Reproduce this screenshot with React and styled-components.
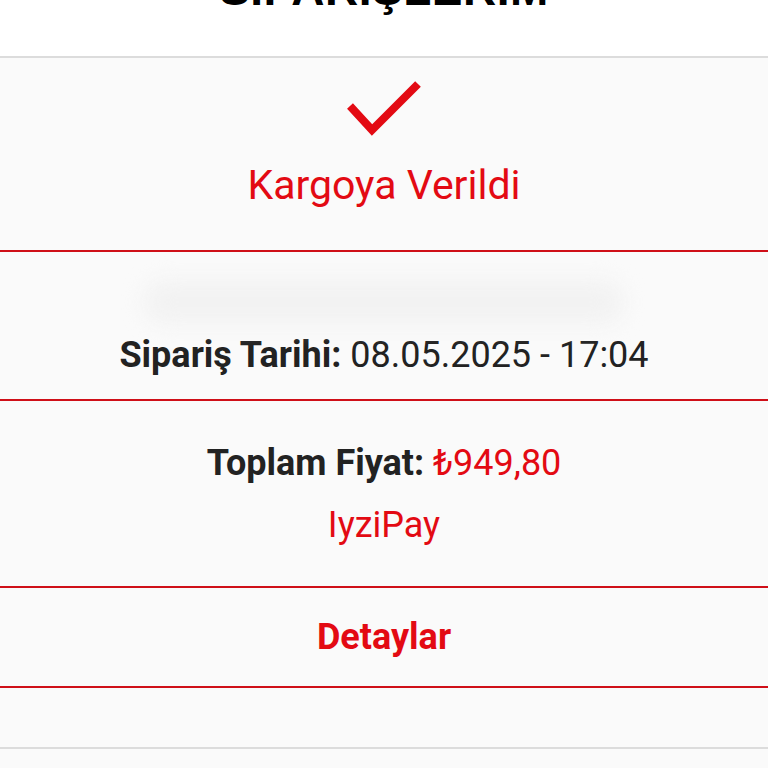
import React from "react";
import styled, { createGlobalStyle } from "styled-components";

const GlobalStyle = createGlobalStyle`
  html, body {
    margin: 0;
    padding: 0;
    background: #fafafa;
  }
  body {
    font-family: Roboto, "Noto Sans", sans-serif;
  }
`;

const Page = styled.div`
  width: 768px;
  height: 768px;
  overflow: hidden;
  background: #fafafa;
`;

const Header = styled.header`
  height: 56px;
  background: #fff;
  border-bottom: 2px solid #dcdcdc;
  overflow: hidden;
  display: flex;
  justify-content: center;
`;

const Title = styled.h1`
  margin: -34px 0 0;
  font-family: "Liberation Sans", Arial, sans-serif;
  font-weight: 700;
  font-size: 46px;
  line-height: 46px;
  color: #000;
  letter-spacing: 0.5px;
`;

const Card = styled.section`
  display: flex;
  flex-direction: column;
`;

const Block = styled.div`
  height: ${(p) => p.$h}px;
  display: flex;
  flex-direction: column;
  align-items: center;
  justify-content: ${(p) => p.$justify || "center"};
  border-bottom: ${(p) => (p.$line ? "2px solid #cf0f18" : "none")};
  box-sizing: border-box;
  padding-top: ${(p) => p.$pt || 0}px;
`;

const Status = styled.div`
  font-size: 41px;
  color: #e30a13;
  margin-top: 21px;
  line-height: 48px;
`;

const Blurred = styled.div`
  width: 480px;
  height: 44px;
  border-radius: 22px;
  background: #f2f2f2;
  filter: blur(10px);
  margin-bottom: 10px;
`;

const Line = styled.div`
  font-size: 36px;
  line-height: 42px;
  color: #222;
  margin-top: ${(p) => p.$mt || 0}px;
`;

const Label = styled.span`
  font-weight: 700;
`;

const Red = styled.span`
  color: #e30a13;
`;

const Method = styled.div`
  font-size: 36px;
  line-height: 42px;
  color: #e30a13;
  margin-top: 20px;
`;

const DetailButton = styled.button`
  border: none;
  background: transparent;
  font-family: Roboto, sans-serif;
  font-size: 36px;
  font-weight: 700;
  color: #e30a13;
  cursor: pointer;
`;

const Footer = styled.div`
  height: 59px;
  border-bottom: 2px solid #dcdcdc;
`;

function Check() {
  return (
    <svg width="76" height="60" viewBox="0 0 76 60">
      <polyline
        points="4,26 26,50 72,4"
        fill="none"
        stroke="#e30a13"
        strokeWidth="8"
        strokeLinecap="butt"
        strokeLinejoin="miter"
      />
    </svg>
  );
}

export default function App() {
  return (
    <Page>
      <GlobalStyle />
      <Header>
        <Title>SİPARİŞLERİM</Title>
      </Header>
      <Card>
        <Block $h={194} $line $justify="flex-start" $pt={22}>
          <Check />
          <Status>Kargoya Verildi</Status>
        </Block>
        <Block $h={149} $line $justify="flex-start" $pt={28}>
          <Blurred />
          <Line>
            <Label>Sipariş Tarihi:</Label> 08.05.2025 - 17:04
          </Line>
        </Block>
        <Block $h={187} $line $justify="flex-start" $pt={41}>
          <Line>
            <Label>Toplam Fiyat:</Label> <Red>₺949,80</Red>
          </Line>
          <Method>IyziPay</Method>
        </Block>
        <Block $h={100} $line>
          <DetailButton>Detaylar</DetailButton>
        </Block>
        <Footer />
      </Card>
    </Page>
  );
}
